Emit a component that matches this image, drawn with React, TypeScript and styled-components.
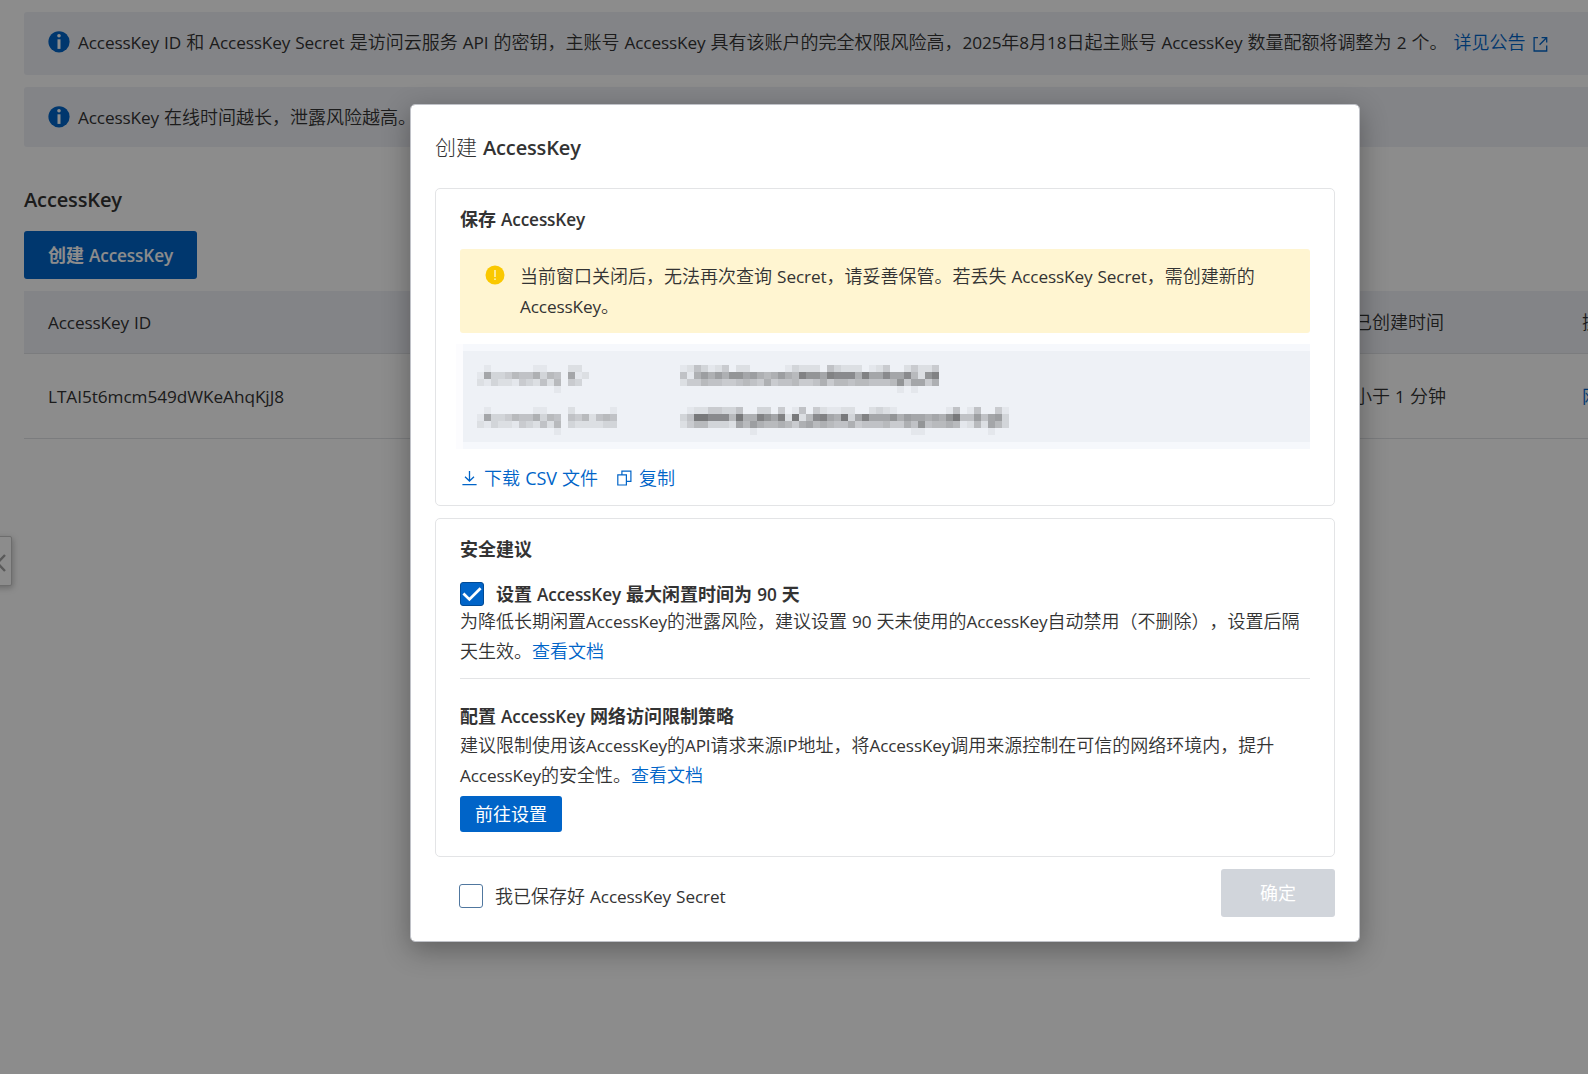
import React from "react";
import styled, { createGlobalStyle } from "styled-components";

const GlobalStyle = createGlobalStyle`
  * { box-sizing: border-box; }
  html, body { margin: 0; padding: 0; background: #fff; overflow: hidden; }
  body {
    font-family: "Open Sans", "Noto Sans CJK SC", sans-serif;
    font-size: 18px;
    line-height: 30px;
    color: #333;
    text-spacing-trim: space-all;
  }
`;

/* ---------- text ---------- */

const Latin = styled.span`
  font-size: 0.955em;
  line-height: 0;
  letter-spacing: -0.008em;
  word-spacing: 0.045em;
`;

const Han = styled.span`
  font-family: "Noto Sans CJK SC", sans-serif;
  font-weight: 350;
  line-height: 0;
`;

/** Sets Latin runs a touch smaller than the Chinese text around them. */
function Mixed({ children }: { children: string }) {
  const runs = children.match(/[\u2e80-\uffef]+|[^\u2e80-\uffef]+/g) ?? [];
  return (
    <>
      {runs.map((run, i) =>
        /[\u2e80-\uffef]/.test(run) ? <Han key={i}>{run}</Han> : <Latin key={i}>{run}</Latin>
      )}
    </>
  );
}

const Link = styled.a`
  color: #0064c8;
  text-decoration: none;
  cursor: pointer;
`;

/* ---------- page behind the dialog ---------- */

const Page = styled.main`
  position: relative;
  width: 1588px;
  height: 1074px;
  padding: 12px 0 0 24px;
  overflow: hidden;
  display: flex;
  flex-direction: column;
  white-space: nowrap;
`;

const Banner = styled.section<{ $height: number }>`
  display: flex;
  align-items: flex-start;
  gap: 8px;
  height: ${(p) => p.$height}px;
  margin-bottom: 12px;
  padding: 15px 0 0 24px;
  background: #eff1f6;
  border-radius: 3px 0 0 3px;
  flex: none;

  > svg { margin-top: 4px; flex: none; }
`;

const BannerText = styled.div`
  display: flex;
  align-items: center;
`;

const BannerLink = styled(Link)`
  display: inline-flex;
  align-items: center;
  gap: 8px;
  margin-left: 6px;

  svg { margin-top: 3px; }
`;

const PageTitle = styled.h2`
  margin: 25px 0 17px;
  font-size: 21px;
  font-weight: 600;
  line-height: 30px;
`;

const PrimaryButton = styled.button<{ $width: number; $height: number; $weight: number }>`
  width: ${(p) => p.$width}px;
  height: ${(p) => p.$height}px;
  padding: 0;
  border: 0;
  border-radius: 3px;
  background: #0064c8;
  color: #fff;
  font: inherit;
  font-weight: ${(p) => p.$weight};
  white-space: pre;
  flex: none;

  ${Han} { font-weight: ${(p) => (p.$weight > 500 ? 700 : 400)}; }

  &:disabled { background: #d1d5db; }
`;

const Table = styled.div`
  margin-top: 12px;
`;

const TableRow = styled.div<{ $head?: boolean }>`
  display: grid;
  grid-template-columns: 1306px 228px 200px;
  align-items: center;
  height: ${(p) => (p.$head ? 63 : 85)}px;
  padding-left: 24px;
  border-bottom: 1px solid #e0e2e5;
  background: ${(p) => (p.$head ? "#eff1f6" : "transparent")};
`;

const KeyId = styled.span`
  ${Latin} { letter-spacing: -0.003em; }
`;

const Handle = styled.div`
  position: absolute;
  left: -12px;
  top: 536px;
  width: 24px;
  height: 50px;
  border: 1px solid #c6c6c6;
  border-radius: 2px;
  background: #fff;
  box-shadow: 1px 2px 6px rgba(0, 0, 0, 0.25);
  display: flex;
  align-items: center;
  justify-content: center;
  padding: 3px 0 0 2px;
`;

/* ---------- dialog ---------- */

const Overlay = styled.div`
  position: absolute;
  inset: 0;
  padding: 104px 0 0 410px;
  background: rgba(0, 0, 0, 0.45);
  white-space: normal;
`;

const Dialog = styled.section`
  width: 950px;
  height: 838px;
  padding: 23px 24px 24px;
  border: 1px solid #c0c2c8;
  border-radius: 5px;
  background: #fff;
  background-clip: padding-box;
  box-shadow: 0 8px 28px rgba(0, 0, 0, 0.32);
`;

const DialogTitle = styled.h1`
  margin: 4px 0 26px;
  font-size: 21px;
  line-height: 30px;
  font-weight: 600;

  ${Han} { font-weight: 300; }
`;

const Card = styled.section<{ $height: number }>`
  height: ${(p) => p.$height}px;
  margin-bottom: 12px;
  padding: 15px 24px 0;
  border: 1px solid #e3e4e6;
  border-radius: 5px;
`;

const CardTitle = styled.h3<{ $compact?: boolean }>`
  margin: 0;
  padding-bottom: 1px;
  font-size: 18px;
  line-height: ${(p) => (p.$compact ? 28 : 30)}px;
  font-weight: 600;

  ${Han} { font-weight: 700; }
`;

const Warning = styled.div`
  display: flex;
  gap: 15px;
  height: 84px;
  margin: 14px 0 11px;
  padding: 12px 0 0 25px;
  border-radius: 3px;
  background: #fff5d1;
  white-space: nowrap;

  svg { flex: none; margin-top: 4px; }
  p { margin: 0; }
`;

const Mosaic = styled.svg`
  display: block;
  margin-left: -4px;
`;

const Actions = styled.div`
  display: flex;
  align-items: center;
  gap: 19px;
  margin-top: 14px;
  padding-left: 2px;

  ${Latin} {
    font-size: 1em;
    word-spacing: 0.04em;
  }
`;

const ActionLink = styled(Link)`
  display: inline-flex;
  align-items: center;
  gap: 7px;
  white-space: pre;
`;

const CheckRow = styled.label<{ $strong?: boolean }>`
  display: flex;
  align-items: center;
  gap: 12px;
  height: 26px;
  margin-top: ${(p) => (p.$strong ? 16 : 6)}px;
  font-weight: ${(p) => (p.$strong ? 600 : 400)};

  ${Han} { font-weight: ${(p) => (p.$strong ? 700 : 350)}; }
`;

const CheckBox = styled.span<{ $checked?: boolean }>`
  display: flex;
  align-items: center;
  justify-content: center;
  width: 24px;
  height: 24px;
  border: 1px solid ${(p) => (p.$checked ? "#004a96" : "#50779f")};
  border-radius: 3px;
  background: ${(p) => (p.$checked ? "#0064c8" : "#fff")};
`;

const Description = styled.p`
  margin: -1px 0 0;
  line-height: 30px;
  white-space: nowrap;
`;

const Divider = styled.hr`
  height: 1px;
  margin: 12px 0 23px;
  border: 0;
  background: #e3e4e6;
`;

const CardAction = styled.div`
  display: flex;
  margin-top: 6px;
`;

const Footer = styled.footer`
  display: flex;
  align-items: center;
  justify-content: space-between;
  height: 48px;
  padding-left: 24px;
`;

/* ---------- icons ---------- */

const InfoIcon = () => (
  <svg width="22" height="22" viewBox="0 0 22 22">
    <circle cx="11" cy="10.8" r="10.6" fill="#0064c8" />
    <circle cx="11" cy="4.8" r="1.8" fill="#fff" />
    <rect x="9.5" y="8.3" width="3" height="9.6" fill="#fff" />
  </svg>
);

const WarnIcon = () => (
  <svg width="20" height="20" viewBox="0 0 20 20">
    <circle cx="10" cy="10" r="9.5" fill="#fac800" />
    <rect x="9.3" y="5" width="1.4" height="7" fill="#fff5d1" />
    <rect x="9.3" y="13.4" width="1.4" height="1.6" fill="#fff5d1" />
  </svg>
);

const ExternalIcon = () => (
  <svg width="15" height="16" viewBox="0 0 15 16" fill="none" stroke="#0064c8" strokeWidth="1.3">
    <path d="M5 1.6H1.1V15h12.6V9.6M8.6 1.6h5.1v5M13.5 1.8 6.6 8.8" />
  </svg>
);

const DownloadIcon = () => (
  <svg width="15" height="16" viewBox="0 0 15 16" fill="none" stroke="#0064c8" strokeWidth="1.3">
    <path d="M7.5 1v9.8M3 6.8l4.5 4.2L12 6.8M.4 14.6h14.2" />
  </svg>
);

const CopyIcon = () => (
  <svg width="15" height="16" viewBox="0 0 15 16" fill="none" stroke="#0064c8" strokeWidth="1.2">
    <path d="M.8 4.8h8.6v10.2H.8zM4.9 4.6V1.1h9v10.2H9.8" />
  </svg>
);

const CheckIcon = () => (
  <svg width="20" height="16" viewBox="0 0 20 16" fill="none" stroke="#fff" strokeWidth="2.8">
    <path d="M1.4 7.6 7.4 13.4 18.6 2.2" />
  </svg>
);

const ChevronIcon = () => (
  <svg width="10" height="18" viewBox="0 0 10 18" fill="none" stroke="#a4a4a4" strokeWidth="2.4">
    <path d="M9 1 1.4 9 9 17" />
  </svg>
);

/* ---------- pixelated credentials ---------- */

const CELL = 7;

// Each hex digit is the darkness of one mosaic cell.
const mosaicBlocks: { col: number; row: number; lines: string[] }[] = [
  {
    col: 3,
    row: 3,
    lines: ["0100000011000220", "1833465573650812", "2132214325260430", "0000000000010000"],
  },
  {
    col: 3,
    row: 9,
    lines: [
      "01000000110002000001",
      "18334655736505462565",
      "21322143252603222233",
      "00000000000100000000",
    ],
  },
  {
    col: 32,
    row: 3,
    lines: [
      "1253124022000001322205322201240024224",
      "5179797aa89767976caa8cbbb7c88b88b62ac",
      "2446554456547455644574665665556a48847",
      "0000000000000000000000000000000101000",
    ],
  },
  {
    col: 32,
    row: 9,
    lines: [
      "01224433500330401504211220023210000000150150041",
      "35ddbbb6d77ca8c2d26bc87d38c888a7988787ad5595893",
      "2466333286976676478676557455564475a566761262863",
      "00000000001000000000000000000000011000000000100",
    ],
  },
];

function MaskedKeys() {
  return (
    <Mosaic width="854" height="105" viewBox="0 0 854 105" shapeRendering="crispEdges">
      <rect width="7" height="105" fill="#fcfcfe" />
      <rect x="7" width="847" height="105" fill="#f6f8fc" />
      <rect x="7" y="7" width="847" height="91" fill="#eef1f6" />
      {mosaicBlocks.map((block, b) =>
        block.lines.map((line, r) =>
          [...line].map((digit, c) =>
            digit === "0" ? null : (
              <rect
                key={`${b}-${r}-${c}`}
                x={(block.col + c) * CELL}
                y={(block.row + r) * CELL}
                width={CELL}
                height={CELL}
                fill="#303030"
                fillOpacity={parseInt(digit, 16) * 0.048}
              />
            )
          )
        )
      )}
    </Mosaic>
  );
}

/* ---------- screen ---------- */

export default function App() {
  return (
    <>
      <GlobalStyle />
      <Page>
        <Banner $height={63}>
          <InfoIcon />
          <BannerText>
            <span>
              <Mixed>
                AccessKey ID 和 AccessKey Secret 是访问云服务 API 的密钥，主账号 AccessKey 具有该账户的完全权限风险高，2025年8月18日起主账号 AccessKey 数量配额将调整为 2 个。
              </Mixed>
            </span>
            <BannerLink>
              <span><Mixed>详见公告</Mixed></span>
              <ExternalIcon />
            </BannerLink>
          </BannerText>
        </Banner>
        <Banner $height={60}>
          <InfoIcon />
          <BannerText>
            <span><Mixed>AccessKey 在线时间越长，泄露风险越高。</Mixed></span>
          </BannerText>
        </Banner>

        <PageTitle>
          <Mixed>AccessKey</Mixed>
        </PageTitle>
        <PrimaryButton $width={173} $height={48} $weight={600}>
          <Mixed>创建 AccessKey</Mixed>
        </PrimaryButton>

        <Table>
          <TableRow $head>
            <span><Mixed>AccessKey ID</Mixed></span>
            <span><Mixed>已创建时间</Mixed></span>
            <span><Mixed>操作</Mixed></span>
          </TableRow>
          <TableRow>
            <KeyId><Mixed>LTAI5t6mcm549dWKeAhqKjJ8</Mixed></KeyId>
            <span><Mixed>小于 1 分钟</Mixed></span>
            <Link><Mixed>网络访问限制策略</Mixed></Link>
          </TableRow>
        </Table>

        <Handle>
          <ChevronIcon />
        </Handle>

        <Overlay>
          <Dialog>
            <DialogTitle>
              <Mixed>创建 AccessKey</Mixed>
            </DialogTitle>

            <Card $height={318}>
              <CardTitle>
                <Mixed>保存 AccessKey</Mixed>
              </CardTitle>
              <Warning>
                <WarnIcon />
                <p>
                  <Mixed>当前窗口关闭后，无法再次查询 Secret，请妥善保管。若丢失 AccessKey Secret，需创建新的</Mixed>
                  <br />
                  <Mixed>AccessKey。</Mixed>
                </p>
              </Warning>
              <MaskedKeys />
              <Actions>
                <ActionLink>
                  <DownloadIcon />
                  <span><Mixed>下载 CSV 文件</Mixed></span>
                </ActionLink>
                <ActionLink>
                  <CopyIcon />
                  <span><Mixed>复制</Mixed></span>
                </ActionLink>
              </Actions>
            </Card>

            <Card $height={339}>
              <CardTitle>
                <Mixed>安全建议</Mixed>
              </CardTitle>
              <CheckRow $strong>
                <CheckBox $checked>
                  <CheckIcon />
                </CheckBox>
                <span><Mixed>设置 AccessKey 最大闲置时间为 90 天</Mixed></span>
              </CheckRow>
              <Description>
                <Mixed>为降低长期闲置AccessKey的泄露风险，建议设置 90 天未使用的AccessKey自动禁用（不删除），设置后隔</Mixed>
                <br />
                <Mixed>天生效。</Mixed>
                <Link><Mixed>查看文档</Mixed></Link>
              </Description>
              <Divider />
              <CardTitle $compact>
                <Mixed>配置 AccessKey 网络访问限制策略</Mixed>
              </CardTitle>
              <Description>
                <Mixed>建议限制使用该AccessKey的API请求来源IP地址，将AccessKey调用来源控制在可信的网络环境内，提升</Mixed>
                <br />
                <Mixed>AccessKey的安全性。</Mixed>
                <Link><Mixed>查看文档</Mixed></Link>
              </Description>
              <CardAction>
                <PrimaryButton $width={102} $height={36} $weight={500}>
                  <Mixed>前往设置</Mixed>
                </PrimaryButton>
              </CardAction>
            </Card>

            <Footer>
              <CheckRow>
                <CheckBox />
                <span><Mixed>我已保存好 AccessKey Secret</Mixed></span>
              </CheckRow>
              <PrimaryButton $width={114} $height={48} $weight={500} disabled>
                <Mixed>确定</Mixed>
              </PrimaryButton>
            </Footer>
          </Dialog>
        </Overlay>
      </Page>
    </>
  );
}
